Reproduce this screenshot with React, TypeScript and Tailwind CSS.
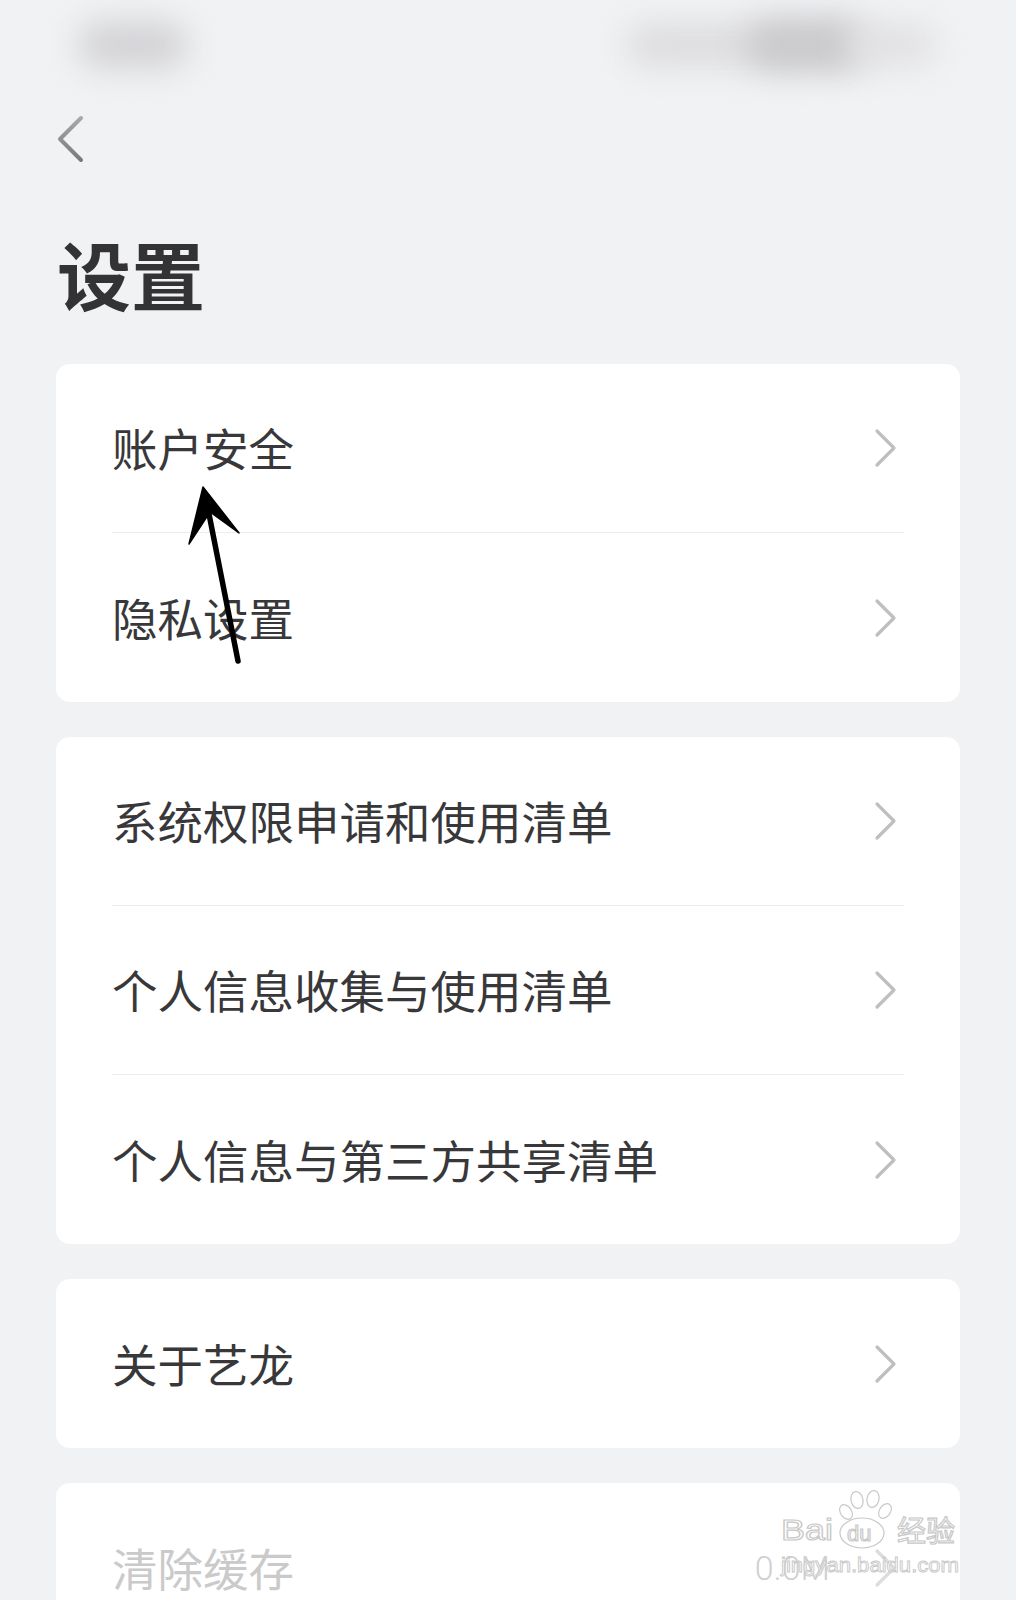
import React from "react";

function Chevron({ color = "#bfbfbf" }: { color?: string }) {
  return (
    <svg width="24" height="40" viewBox="0 0 24 40" className="shrink-0 mr-[6px]">
      <path d="M3 3 L20 20 L3 37" fill="none" stroke={color} strokeWidth="3.2" strokeLinecap="round" strokeLinejoin="round" />
    </svg>
  );
}

function Row({ label, last = false, faded = false, value }: { label: string; last?: boolean; faded?: boolean; value?: string }) {
  return (
    <div
      className={
        "mx-[56px] h-[169px] flex items-center justify-between " +
        (last ? "" : "border-b border-[#ececee]")
      }
    >
      <span className={"text-[45.5px] leading-none " + (faded ? "text-[#cacaca]" : "text-[#38383a]")}>{label}</span>
      <div className="flex items-center">
        {value && (
          <span className="text-[34px] leading-none text-[#d0d0d0] mr-[44px] font-['Roboto',sans-serif] font-light">{value}</span>
        )}
        <Chevron color={faded ? "#dcdcdc" : "#bfbfbf"} />
      </div>
    </div>
  );
}

function Card({ children }: { children: React.ReactNode }) {
  return <div className="mx-[56px] w-[904px] rounded-[14px] bg-white flex flex-col">{children}</div>;
}

export default function App() {
  return (
    <div className="relative w-[1016px] h-[1600px] overflow-hidden bg-[#f1f2f4] font-['Noto_Sans_CJK_SC','Noto_Sans',sans-serif]">
      {/* blurred status bar */}
      <div className="h-[90px] flex items-center justify-between pl-[78px] pr-[80px]">
        <div className="w-[110px] h-[46px] rounded-full bg-[#d2d2d5] blur-[16px]" />
        <div className="flex items-center">
          <div className="w-[230px] h-[42px] rounded-full bg-[#dcdcdf] blur-[16px]" />
          <div className="w-[120px] h-[48px] rounded-full bg-[#c9c9cc] blur-[16px] -ml-[110px]" />
          <div className="w-[90px] h-[40px] rounded-full bg-[#e0e0e3] blur-[16px] -ml-[20px]" />
        </div>
      </div>

      {/* nav */}
      <div className="h-[97px] flex items-center pl-[55px]">
        <svg width="32" height="48" viewBox="0 0 32 48">
          <defs>
            <linearGradient id="bk" x1="0" y1="0" x2="0" y2="1">
              <stop offset="0" stopColor="#a8a8a8" />
              <stop offset="1" stopColor="#7a7a7a" />
            </linearGradient>
          </defs>
          <path d="M26 3 L5 24 L26 45" fill="none" stroke="url(#bk)" strokeWidth="4" strokeLinecap="round" strokeLinejoin="round" />
        </svg>
      </div>

      {/* title */}
      <h1 className="mt-[49px] pl-[57px] text-[74px] leading-none font-bold text-[#333335]">设置</h1>

      {/* cards */}
      <div className="mt-[54px] flex flex-col gap-[35px]">
        <Card>
          <Row label="账户安全" />
          <Row label="隐私设置" last />
        </Card>
        <Card>
          <Row label="系统权限申请和使用清单" />
          <Row label="个人信息收集与使用清单" />
          <Row label="个人信息与第三方共享清单" last />
        </Card>
        <Card>
          <Row label="关于艺龙" last />
        </Card>
        <Card>
          <Row label="清除缓存" last faded value="0.0M" />
        </Card>
      </div>

      {/* annotation arrow + watermark overlay */}
      <svg className="absolute inset-0 pointer-events-none" width="1016" height="1600" viewBox="0 0 1016 1600">
        <path d="M238 661 L209 514" fill="none" stroke="#000" strokeWidth="5.5" strokeLinecap="round" />
        <polygon points="203,487 239,533 210,512 189,544" fill="#000" stroke="#000" strokeWidth="1.5" strokeLinejoin="round" />

        <g fill="#ffffff" stroke="#c8c8c8" strokeWidth="1.2">
          <ellipse cx="846" cy="1512" rx="5.5" ry="8" transform="rotate(-35 846 1512)" />
          <ellipse cx="857" cy="1500" rx="6" ry="8.5" transform="rotate(-12 857 1500)" />
          <ellipse cx="873" cy="1499" rx="6" ry="8.5" transform="rotate(12 873 1499)" />
          <ellipse cx="885" cy="1511" rx="5.5" ry="8" transform="rotate(35 885 1511)" />
          <ellipse cx="862" cy="1533" rx="22" ry="15" />
          <text x="781" y="1540" fontSize="30" fontFamily="Liberation Sans, sans-serif" textLength="52" lengthAdjust="spacingAndGlyphs">Bai</text>
          <text x="847" y="1541" fontSize="22" fontFamily="Liberation Sans, sans-serif">du</text>
          <text x="897" y="1542" fontSize="29" fontFamily="Noto Sans CJK SC, sans-serif">经验</text>
          <text x="781" y="1572" fontSize="21" fontFamily="Liberation Sans, sans-serif" textLength="178" lengthAdjust="spacingAndGlyphs" strokeWidth="0.9">jingyan.baidu.com</text>
        </g>
      </svg>
    </div>
  );
}
